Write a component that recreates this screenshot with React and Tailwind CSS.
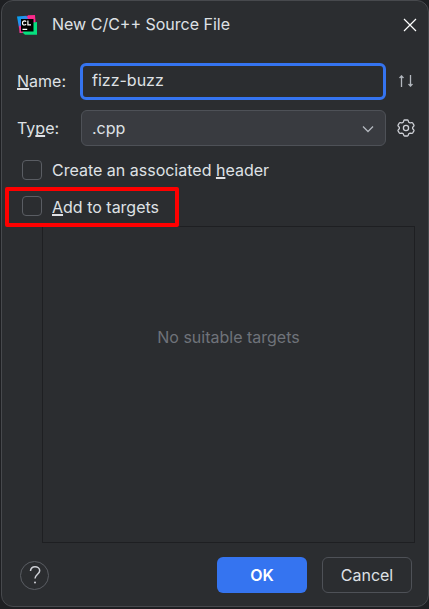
import React from "react";

function Key({ children }) {
  return (
    <span className="underline decoration-2 underline-offset-1 [text-decoration-skip-ink:none]">
      {children}
    </span>
  );
}

function AppLogo() {
  return (
    <svg width="20" height="20" viewBox="0 0 20 20" aria-hidden="true">
      <defs>
        <linearGradient id="logo-blue" x1="0" y1="0" x2="1" y2="1">
          <stop offset="0.2" stopColor="#0b9df0" />
          <stop offset="0.8" stopColor="#6f6ce0" />
        </linearGradient>
      </defs>
      <path d="M8.5 3 11 .3 18 0 18.5 7 15 12 8 12Z" fill="#fb2a8c" />
      <path d="M0 1.5 9.500 .8 11 3.500 9 13 2 13Z" fill="url(#logo-blue)" />
      <path d="M2 11h7v6.800l-6.500.2Z" fill="#f0368f" />
      <path d="M16 7.5 20 7 20 19.7H8L5.500 17.500 7 16h9Z" fill="#07e07f" />
      <rect x="4" y="4" width="12.5" height="12.5" fill="#000" />
      <path d="M9.1 6.6C8.7 6 8.2 5.8 7.5 5.8 6.300 5.800 5.500 6.600 5.500 7.900S6.300 10 7.500 10c.7 0 1.200-.2 1.600-.8M10.900 5.500V9.900H14M5.500 14.300h4.700" fill="none" stroke="#fff" strokeWidth="1.2" />
    </svg>
  );
}

export default function App() {
  return (
    <div className="flex min-h-screen bg-[#1e1f22] pb-0.5 pl-px font-['Inter','Liberation_Sans',sans-serif] text-base text-[#dfe1e5]">
      <form
        className="flex flex-1 flex-col rounded-xl border border-[#47494d] bg-[#2b2d30]"
        onSubmit={(e) => e.preventDefault()}
      >
        <header className="flex h-12 shrink-0 items-center gap-[15px] pl-[15px] pr-[11px]">
          <AppLogo />
          <h1 className="flex-1 pb-0.5">New C/C++ Source File</h1>
          <button type="button" aria-label="Close" className="text-white">
            <svg width="14" height="14" viewBox="0 0 14 14" fill="none" stroke="currentColor" strokeWidth="1.2">
              <path d="M1 1l12 12M13 1L1 13" />
            </svg>
          </button>
        </header>

        <div className="flex flex-1 flex-col px-[13px] pt-3.5">
          <div className="grid grid-cols-[63px_1fr_29px] items-center gap-y-2.5 pl-0.5">
            <label htmlFor="name" className="pb-0.5"><Key>N</Key>ame:</label>
            <input
              id="name"
              defaultValue="fizz-buzz"
              className="h-[37px] w-full min-w-0 rounded-md border-[3px] border-[#3574f0] bg-[#2b2d30] px-[9px] pb-1 outline-none"
            />
            <button type="button" aria-label="Switch field" className="ml-[11px] text-[#b4b8bf]">
              <svg width="18" height="18" viewBox="0 0 18 18" fill="currentColor" stroke="currentColor" strokeWidth="1.300">
                <path d="M4.500 14V4M13.500 2v10" fill="none" />
                <path d="M4.500 2.200 6.700 4.700H2.300ZM13.500 13.800l2.200-2.500h-4.400Z" strokeWidth="0.6" />
              </svg>
            </button>

            <label htmlFor="type">Ty<Key>p</Key>e:</label>
            <div className="relative pl-px">
              <select
                id="type"
                className="h-9 w-full appearance-none rounded-md border border-[#4e5157] bg-[#393b40] px-2.5 outline-none"
              >
                <option>.cpp</option>
              </select>
              <svg className="pointer-events-none absolute right-3 top-3.5" width="12" height="10" viewBox="0 0 12 10" fill="none" stroke="#b4b8bf" strokeWidth="1.3">
                <path d="M1 2.500l5 5 5-5" />
              </svg>
            </div>
            <button type="button" aria-label="Edit types" className="ml-[11px] text-[#ced0d6]">
              <svg width="18" height="18" viewBox="0 0 18 18" fill="none" stroke="currentColor" strokeWidth="1.3" strokeLinejoin="round">
                <path d="M7.600 1h2.800Q11 1 11.200 1.600L11.700 3.200Q12.300 3.900 13.200 3.900L14.800 3.600Q15.400 3.500 15.700 4L16.900 6.100Q17.200 6.700 16.800 7.100L15.700 8.300Q15.400 9 15.700 9.700L16.800 10.900Q17.200 11.300 16.900 11.900L15.700 14Q15.400 14.500 14.800 14.400L13.200 14.100Q12.300 14.100 11.700 14.800L11.200 16.400Q11 17 10.400 17H7.600Q7 17 6.800 16.400L6.300 14.800Q5.700 14.100 4.800 14.100L3.200 14.400Q2.600 14.500 2.300 14L1.100 11.900Q.8 11.300 1.200 10.900L2.300 9.700Q2.600 9 2.300 8.300L1.200 7.100Q.8 6.700 1.100 6.100L2.300 4Q2.600 3.500 3.200 3.600L4.800 3.900Q5.700 3.900 6.300 3.200L6.800 1.600Q7 1 7.600 1Z" />
                <circle cx="9" cy="9" r="2.600" />
              </svg>
            </button>
          </div>

          <div className="mt-3 flex flex-col items-start gap-3 pl-[7px]">
            <label className="flex h-6 items-center gap-2.5">
              <input type="checkbox" className="size-5 appearance-none rounded border border-[#5a5d63]" />
              <span>Create an associated <Key>h</Key>eader</span>
            </label>
            <label className="relative flex h-6 items-center gap-2.5">
              <input type="checkbox" className="size-5 appearance-none rounded border border-[#5a5d63]" />
              <span className="pt-0.5"><Key>A</Key>dd to targets</span>
              <span className="pointer-events-none absolute -bottom-[9px] -left-[17px] -right-5 -top-[7px] rounded-xs border-4 border-[#ff0000]" />
            </label>
          </div>

          <div className="ml-[27px] mt-2 flex flex-1 justify-center border border-[#1e1f22] pt-[98px] text-[#6f737a]">
            No suitable targets
          </div>
        </div>

        <footer className="flex items-center px-4 pb-[13px] pl-[18px] pt-3.5">
          <button
            type="button"
            aria-label="Help"
            className="flex size-[29px] items-center justify-center rounded-full border border-[#5a5d63] text-[#ced0d6]"
          >
            <svg width="14" height="20" viewBox="0 0 14 20" fill="none" stroke="currentColor" strokeWidth="1.500">
              <path d="M2.500 6C2.500 3.300 4.500 1.700 7 1.700S11.700 3.300 11.700 5.700C11.700 9 7 9.500 7 13.500" />
              <circle cx="7" cy="17.500" r="1" fill="currentColor" stroke="none" />
            </svg>
          </button>
          <button type="submit" className="ml-auto h-9 w-[90px] rounded-md bg-[#3574f0] font-semibold text-white">
            OK
          </button>
          <button type="button" className="ml-[15px] h-9 w-[90px] rounded-md border border-[#4e5157]">
            Cancel
          </button>
        </footer>
      </form>
    </div>
  );
}
